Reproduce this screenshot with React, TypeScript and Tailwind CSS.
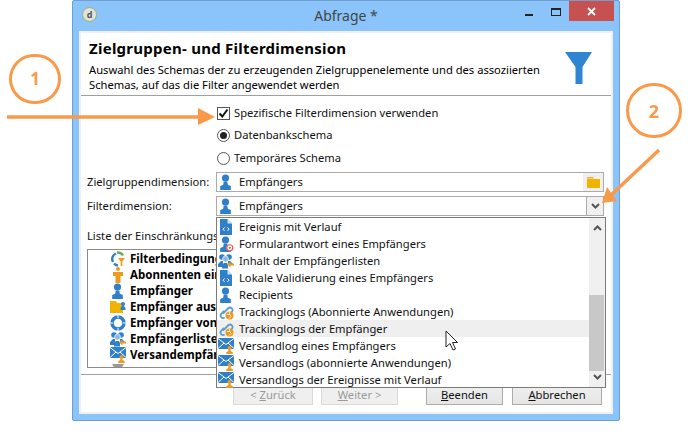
import React from 'react';

type IconKind = 'person' | 'doc' | 'at' | 'list' | 'link' | 'mail' | 'cycle' | 'orange' | 'folder' | 'ring' | 'funnel';

function Person({ color = '#2f7fc9' }: { color?: string }) {
    return (
        <>
            <circle cx="7.5" cy="4" r="3.6" fill={color} />
            <path d="M5.7 7.5h3.6l.5 3.2 3 1.3V16H2.2v-4l3-1.3z" fill={color} />
        </>
    );
}

function Stamp() {
    return (
        <>
            <circle cx="11.5" cy="10" r="2" fill="#ee9a1e" />
            <path d="M10.5 11.5h2l.3 1.7 1.9.8V16H8.3v-2l1.9-.8z" fill="#ee9a1e" />
        </>
    );
}

function RowIcon({ kind }: { kind: IconKind }) {
    return (
        <svg width="16" height="16" viewBox="0 0 16 16" className="shrink-0">
            {kind === 'person' && <Person />}
            {kind === 'doc' && (
                <>
                    <path d="M2 0h7.5L14 4.5V16H2z" fill="#2f7fc9" />
                    <path d="M9.5 0v4.5H14z" fill="#cfe3f5" />
                    <path d="M6.5 8.5 5 10.2l1.5 1.7M9.5 8.5 11 10.2l-1.5 1.7" stroke="#fff" strokeWidth="1" fill="none" />
                </>
            )}
            {kind === 'at' && (
                <>
                    <Person />
                    <circle cx="11.8" cy="11.8" r="3.4" fill="#fff" />
                    <circle cx="11.8" cy="11.8" r="3" fill="none" stroke="#e2574c" strokeWidth="1.1" />
                    <circle cx="11.8" cy="11.8" r="1.1" fill="#e2574c" />
                </>
            )}
            {kind === 'list' && (
                <>
                    <circle cx="4" cy="4" r="2.8" fill="#2f7fc9" />
                    <circle cx="11" cy="4" r="2.8" fill="#2f7fc9" />
                    <path d="M0 14v-3l3-3h2v6zM15 11l-3-3h-2v3z" fill="#2f7fc9" />
                    <circle cx="7.5" cy="6" r="3" fill="#8dbbe4" stroke="#fff" strokeWidth=".6" />
                    <path d="M4 15.5v-3.5l2-2h3l1 2v3.5z" fill="#2f7fc9" />
                    <path d="M16 10.5h-3.5V8.5L9 11.5l3.5 3v-2H16z" fill="#ee9a1e" />
                </>
            )}
            {kind === 'link' && (
                <>
                    <path d="M5 9.5 10.5 4a2.6 2.6 0 0 1 3.6 3.6L11.5 10M6 7 3 10a2.6 2.6 0 0 0 3.6 3.6" stroke="#5b9bd5" strokeWidth="1.8" fill="none" />
                    <circle cx="11.5" cy="11.5" r="4" fill="#ee9a1e" />
                    <path d="M9 10.5h3l1 2-2 2M11.5 8v2" stroke="#fff" strokeWidth=".8" fill="none" />
                </>
            )}
            {kind === 'mail' && (
                <>
                    <path d="M0 0h16v11H0z" fill="#2f7fc9" />
                    <path d="M0 .5 8 6.5l8-6M0 10.5 6 5M16 10.5 10 5" stroke="#fff" strokeWidth="1" fill="none" />
                    <Stamp />
                </>
            )}
            {kind === 'cycle' && (
                <>
                    <path d="M3 11A6 6 0 0 1 6 2.5" stroke="#2f7fc9" strokeWidth="2.4" fill="none" />
                    <path d="M7 1.5a6 6 0 0 1 6 3" stroke="#5eb14a" strokeWidth="2.4" fill="none" />
                    <path d="M4 12.5a6 6 0 0 0 4 2" stroke="#2f7fc9" strokeWidth="2.4" fill="none" />
                    <path d="M8 7h7l-2.7 3.4V15h-1.6v-4.6z" fill="#ee9a1e" />
                </>
            )}
            {kind === 'orange' && (
                <>
                    <circle cx="8" cy="2" r="2" fill="#ee9a1e" />
                    <path d="M3 5h10v4h-2.5v7h-5V9H3z" fill="#ee9a1e" />
                </>
            )}
            {kind === 'folder' && (
                <>
                    <path d="M0 2h6l1 2h-7z" fill="#f4b400" />
                    <path d="M0 4h13v10H0z" fill="#eeb400" />
                    <circle cx="13" cy="5" r="2" fill="#2f7fc9" />
                    <path d="M10.5 9 12 7h2l1.5 2v2h-5z" fill="#2f7fc9" />
                </>
            )}
            {kind === 'ring' && (
                <>
                    <circle cx="8" cy="8" r="6" fill="none" stroke="#2f7fc9" strokeWidth="3.4" />
                    <path d="M8 0v3M8 13v3M0 8h3M13 8h3" stroke="#fff" strokeWidth="1" />
                </>
            )}
            {kind === 'funnel' && <path d="M2 1h12L9.5 8v6h-3V8z" fill="#9a9a9a" />}
        </svg>
    );
}

const treeRows: { icon: IconKind; label: string }[] = [
    { icon: 'cycle', label: 'Filterbedingungen' },
    { icon: 'orange', label: 'Abonnenten einer Anwendung' },
    { icon: 'person', label: 'Empfänger' },
    { icon: 'folder', label: 'Empfänger aus einem Ordner' },
    { icon: 'ring', label: 'Empfänger von Versand' },
    { icon: 'list', label: 'Empfängerliste' },
    { icon: 'mail', label: 'Versandempfänger' },
];

const dropdownRows: { icon: IconKind; label: string; active?: boolean }[] = [
    { icon: 'doc', label: 'Ereignis mit Verlauf' },
    { icon: 'at', label: 'Formularantwort eines Empfängers' },
    { icon: 'list', label: 'Inhalt der Empfängerlisten' },
    { icon: 'doc', label: 'Lokale Validierung eines Empfängers' },
    { icon: 'person', label: 'Recipients' },
    { icon: 'link', label: 'Trackinglogs (Abonnierte Anwendungen)' },
    { icon: 'link', label: 'Trackinglogs der Empfänger', active: true },
    { icon: 'mail', label: 'Versandlog eines Empfängers' },
    { icon: 'mail', label: 'Versandlogs (abonnierte Anwendungen)' },
    { icon: 'mail', label: 'Versandlogs der Ereignisse mit Verlauf' },
];

function Chevron({ up = false }: { up?: boolean }) {
    return (
        <svg width="9" height="6" viewBox="0 0 9 6" className={up ? 'rotate-180' : ''}>
            <path d="M1 1l3.5 3.5L8 1" stroke="#555" strokeWidth="2" fill="none" />
        </svg>
    );
}

function WizardButton({ disabled = false, className, children }: { disabled?: boolean; className: string; children: React.ReactNode }) {
    return (
        <div className={`h-[21px] flex items-center justify-center border ${disabled ? 'border-[#d9d9d9] bg-[#efefef] text-[#9a9a9a]' : 'border-[#acacac] bg-gradient-to-b from-[#f0f0f0] to-[#e5e5e5] text-[#111]'} ${className}`}>
            <span>{children}</span>
        </div>
    );
}

export default function App() {
    return (
        <div className="relative w-[692px] h-[436px] bg-white overflow-hidden text-[11.2px] leading-[16px] text-[#111] font-['Noto_Sans',sans-serif]">
            <div className="absolute left-[72px] top-0 w-[548px] h-[421px] bg-[#8ac4fa] border border-[#6f9fce] rounded-[2px] flex flex-col">
                {/* title bar */}
                <div className="relative h-[30px] shrink-0 flex items-center justify-center">
                    <div className="absolute left-[9px] top-[6px] w-[15px] h-[15px] rounded-full bg-[#dfe3dc] border border-[#9cb26a] flex items-center justify-center text-[9px] font-bold text-[#555]">d</div>
                    <span className="text-[14px] text-[#444]">Abfrage *</span>
                    <div className="absolute left-[452px] top-[13px] w-[8px] h-[2px] bg-[#222]" />
                    <div className="absolute left-[478px] top-[7px] w-[10px] h-[8px] border border-[#222] border-t-2" />
                    <div className="absolute right-[5px] top-0 w-[45px] h-[20px] bg-[#c75050] flex items-center justify-center">
                        <svg width="9" height="9" viewBox="0 0 9 9">
                            <path d="M1 1l7 7M8 1 1 8" stroke="#fff" strokeWidth="1.8" />
                        </svg>
                    </div>
                </div>

                {/* dialog body */}
                <div className="relative ml-[6px] mr-[6px] w-[534px] h-[383px] bg-white border-2 border-[#f0f0f0] flex flex-col">
                    <div className="h-[63px] shrink-0 border-b border-[#a0a0a0] pl-[8px] pt-[5px] flex justify-between">
                        <div>
                            <div className="text-[15px] leading-[20px] font-bold text-black tracking-[0.25px]">Zielgruppen- und Filterdimension</div>
                            <div className="mt-[4px] leading-[15px] text-black whitespace-nowrap">
                                Auswahl des Schemas der zu erzeugenden Zielgruppenelemente und des assoziierten
                                <br />
                                Schemas, auf das die Filter angewendet werden
                            </div>
                        </div>
                        <svg width="28" height="33" viewBox="0 0 28 33" className="mt-[14px] mr-[18px]">
                            <path d="M0 0h27L17.5 15v17h-7V15z" fill="#2f85d2" />
                        </svg>
                    </div>

                    <div className="pl-[6px] pr-[7px] flex flex-col flex-1 min-h-0">
                        <div className="ml-[130px] mt-[6px] h-[22px] flex items-center gap-[4px]">
                            <div className="w-[13px] h-[13px] border border-[#555] flex items-center justify-center bg-white">
                                <svg width="11" height="11" viewBox="0 0 11 11">
                                    <path d="M1.5 5.5 4.3 8.5 9.5 1.5" stroke="#111" strokeWidth="2" fill="none" />
                                </svg>
                            </div>
                            <span>Spezifische Filterdimension verwenden</span>
                        </div>
                        <div className="ml-[130px] h-[22px] flex items-center gap-[4px]">
                            <div className="w-[13px] h-[13px] rounded-full border border-[#555] flex items-center justify-center">
                                <div className="w-[7px] h-[7px] rounded-full bg-[#222]" />
                            </div>
                            <span>Datenbankschema</span>
                        </div>
                        <div className="ml-[130px] mt-[1px] h-[22px] flex items-center gap-[4px]">
                            <div className="w-[13px] h-[13px] rounded-full border border-[#555]" />
                            <span>Temporäres Schema</span>
                        </div>

                        <div className="mt-[3px] h-[20px] flex items-center">
                            <span className="w-[129px] shrink-0">Zielgruppendimension:</span>
                            <div className="flex-1 h-full border border-[#ababab] flex items-center pl-[1px]">
                                <RowIcon kind="person" />
                                <span className="ml-[5px] flex-1">Empfängers</span>
                                <div className="w-[20px] h-full bg-[#f0f0f0] flex items-center justify-center">
                                    <svg width="13" height="11" viewBox="0 0 13 11">
                                        <path d="M0 0h6l1 1.5H0z" fill="#f4a83a" />
                                        <path d="M0 2h13v9H0z" fill="#eeb400" />
                                    </svg>
                                </div>
                            </div>
                        </div>
                        <div className="mt-[4px] h-[20px] flex items-center">
                            <span className="w-[129px] shrink-0">Filterdimension:</span>
                            <div className="flex-1 h-full border border-[#ababab] flex items-center pl-[1px]">
                                <RowIcon kind="person" />
                                <span className="ml-[5px] flex-1">Empfängers</span>
                                <div className="w-[17px] h-full bg-[#f0f0f0] border-l border-[#ababab] flex items-center justify-center">
                                    <Chevron />
                                </div>
                            </div>
                        </div>

                        <div className="mt-[12px] h-[16px]">Liste der Einschränkungsfilter:</div>
                        <div className="mt-[5px] h-[119px] w-[400px] border border-[#8a8a8a] overflow-hidden pl-[22px] pt-[1px]">
                            {treeRows.map((row) => (
                                <div key={row.label} className="h-[16px] flex items-center gap-[4px] text-[11.5px] font-bold text-black whitespace-nowrap">
                                    <RowIcon kind={row.icon} />
                                    <span>{row.label}</span>
                                </div>
                            ))}
                            <div className="relative h-[16px] flex items-center gap-[4px] text-[#555] whitespace-nowrap">
                                <div className="absolute left-[-18px] top-[6px] w-[9px] h-[9px] border border-[#999]" />
                                <RowIcon kind="funnel" />
                                <span>Benutzerfilter</span>
                            </div>
                        </div>
                    </div>

                    <div className="h-[38px] shrink-0 border-t border-[#a0a0a0] relative flex pt-[9px] pl-[152px]">
                        <WizardButton disabled className="w-[80px]">&lt; <u>Z</u>urück</WizardButton>
                        <WizardButton disabled className="w-[77px] ml-[8px]"><u>W</u>eiter &gt;</WizardButton>
                        <WizardButton className="w-[77px] ml-[28px]"><u>B</u>eenden</WizardButton>
                        <WizardButton className="w-[90px] ml-[9px]"><u>A</u>bbrechen</WizardButton>
                    </div>

                    {/* open combobox list */}
                    <div className="absolute left-[135px] top-[184px] w-[390px] h-[171px] bg-white border border-[#7a7a7a] flex">
                        <div className="flex-1 min-w-0">
                            {dropdownRows.map((row) => (
                                <div key={row.label} className={`h-[17px] flex items-center pl-[1px] gap-[5px] whitespace-nowrap ${row.active ? 'bg-[#efefef]' : ''}`}>
                                    <RowIcon kind={row.icon} />
                                    <span>{row.label}</span>
                                </div>
                            ))}
                        </div>
                        <div className="w-[16px] bg-[#f0f0f0] flex flex-col items-center justify-between pt-[7px] pb-[7px] relative">
                            <Chevron up />
                            <div className="absolute left-0 right-[1px] top-[77px] h-[76px] bg-[#c8c8c8]" />
                            <Chevron />
                        </div>
                    </div>
                </div>
            </div>

            {/* cursor */}
            <svg width="16" height="22" viewBox="0 0 16 22" className="absolute left-[445px] top-[330px]">
                <path d="M1 1v16l4-3.5 3 6.5 2.5-1-3-6.5h5z" fill="#fff" stroke="#222" strokeWidth="1" />
            </svg>

            {/* callouts */}
            <div className="absolute left-[9px] top-[54px] w-[52px] h-[50px] rounded-full border-[3px] border-[#f9994a] flex items-center justify-center text-[17px] font-bold text-[#f9994a]">1</div>
            <div className="absolute left-[626px] top-[83px] w-[56px] h-[55px] rounded-full border-[3px] border-[#f9994a] flex items-center justify-center text-[18px] font-bold text-[#f9994a]">2</div>
            <svg width="692" height="436" viewBox="0 0 692 436" className="absolute left-0 top-0 pointer-events-none">
                <path d="M7 117H200" stroke="#f9994a" strokeWidth="3.5" />
                <path d="M198 108l17 9-17 8z" fill="#f9994a" />
                <path d="M659 150 610 196" stroke="#f9994a" strokeWidth="3.5" />
                <path d="M617 201l-15 2 5-16z" fill="#f9994a" />
            </svg>
        </div>
    );
}
